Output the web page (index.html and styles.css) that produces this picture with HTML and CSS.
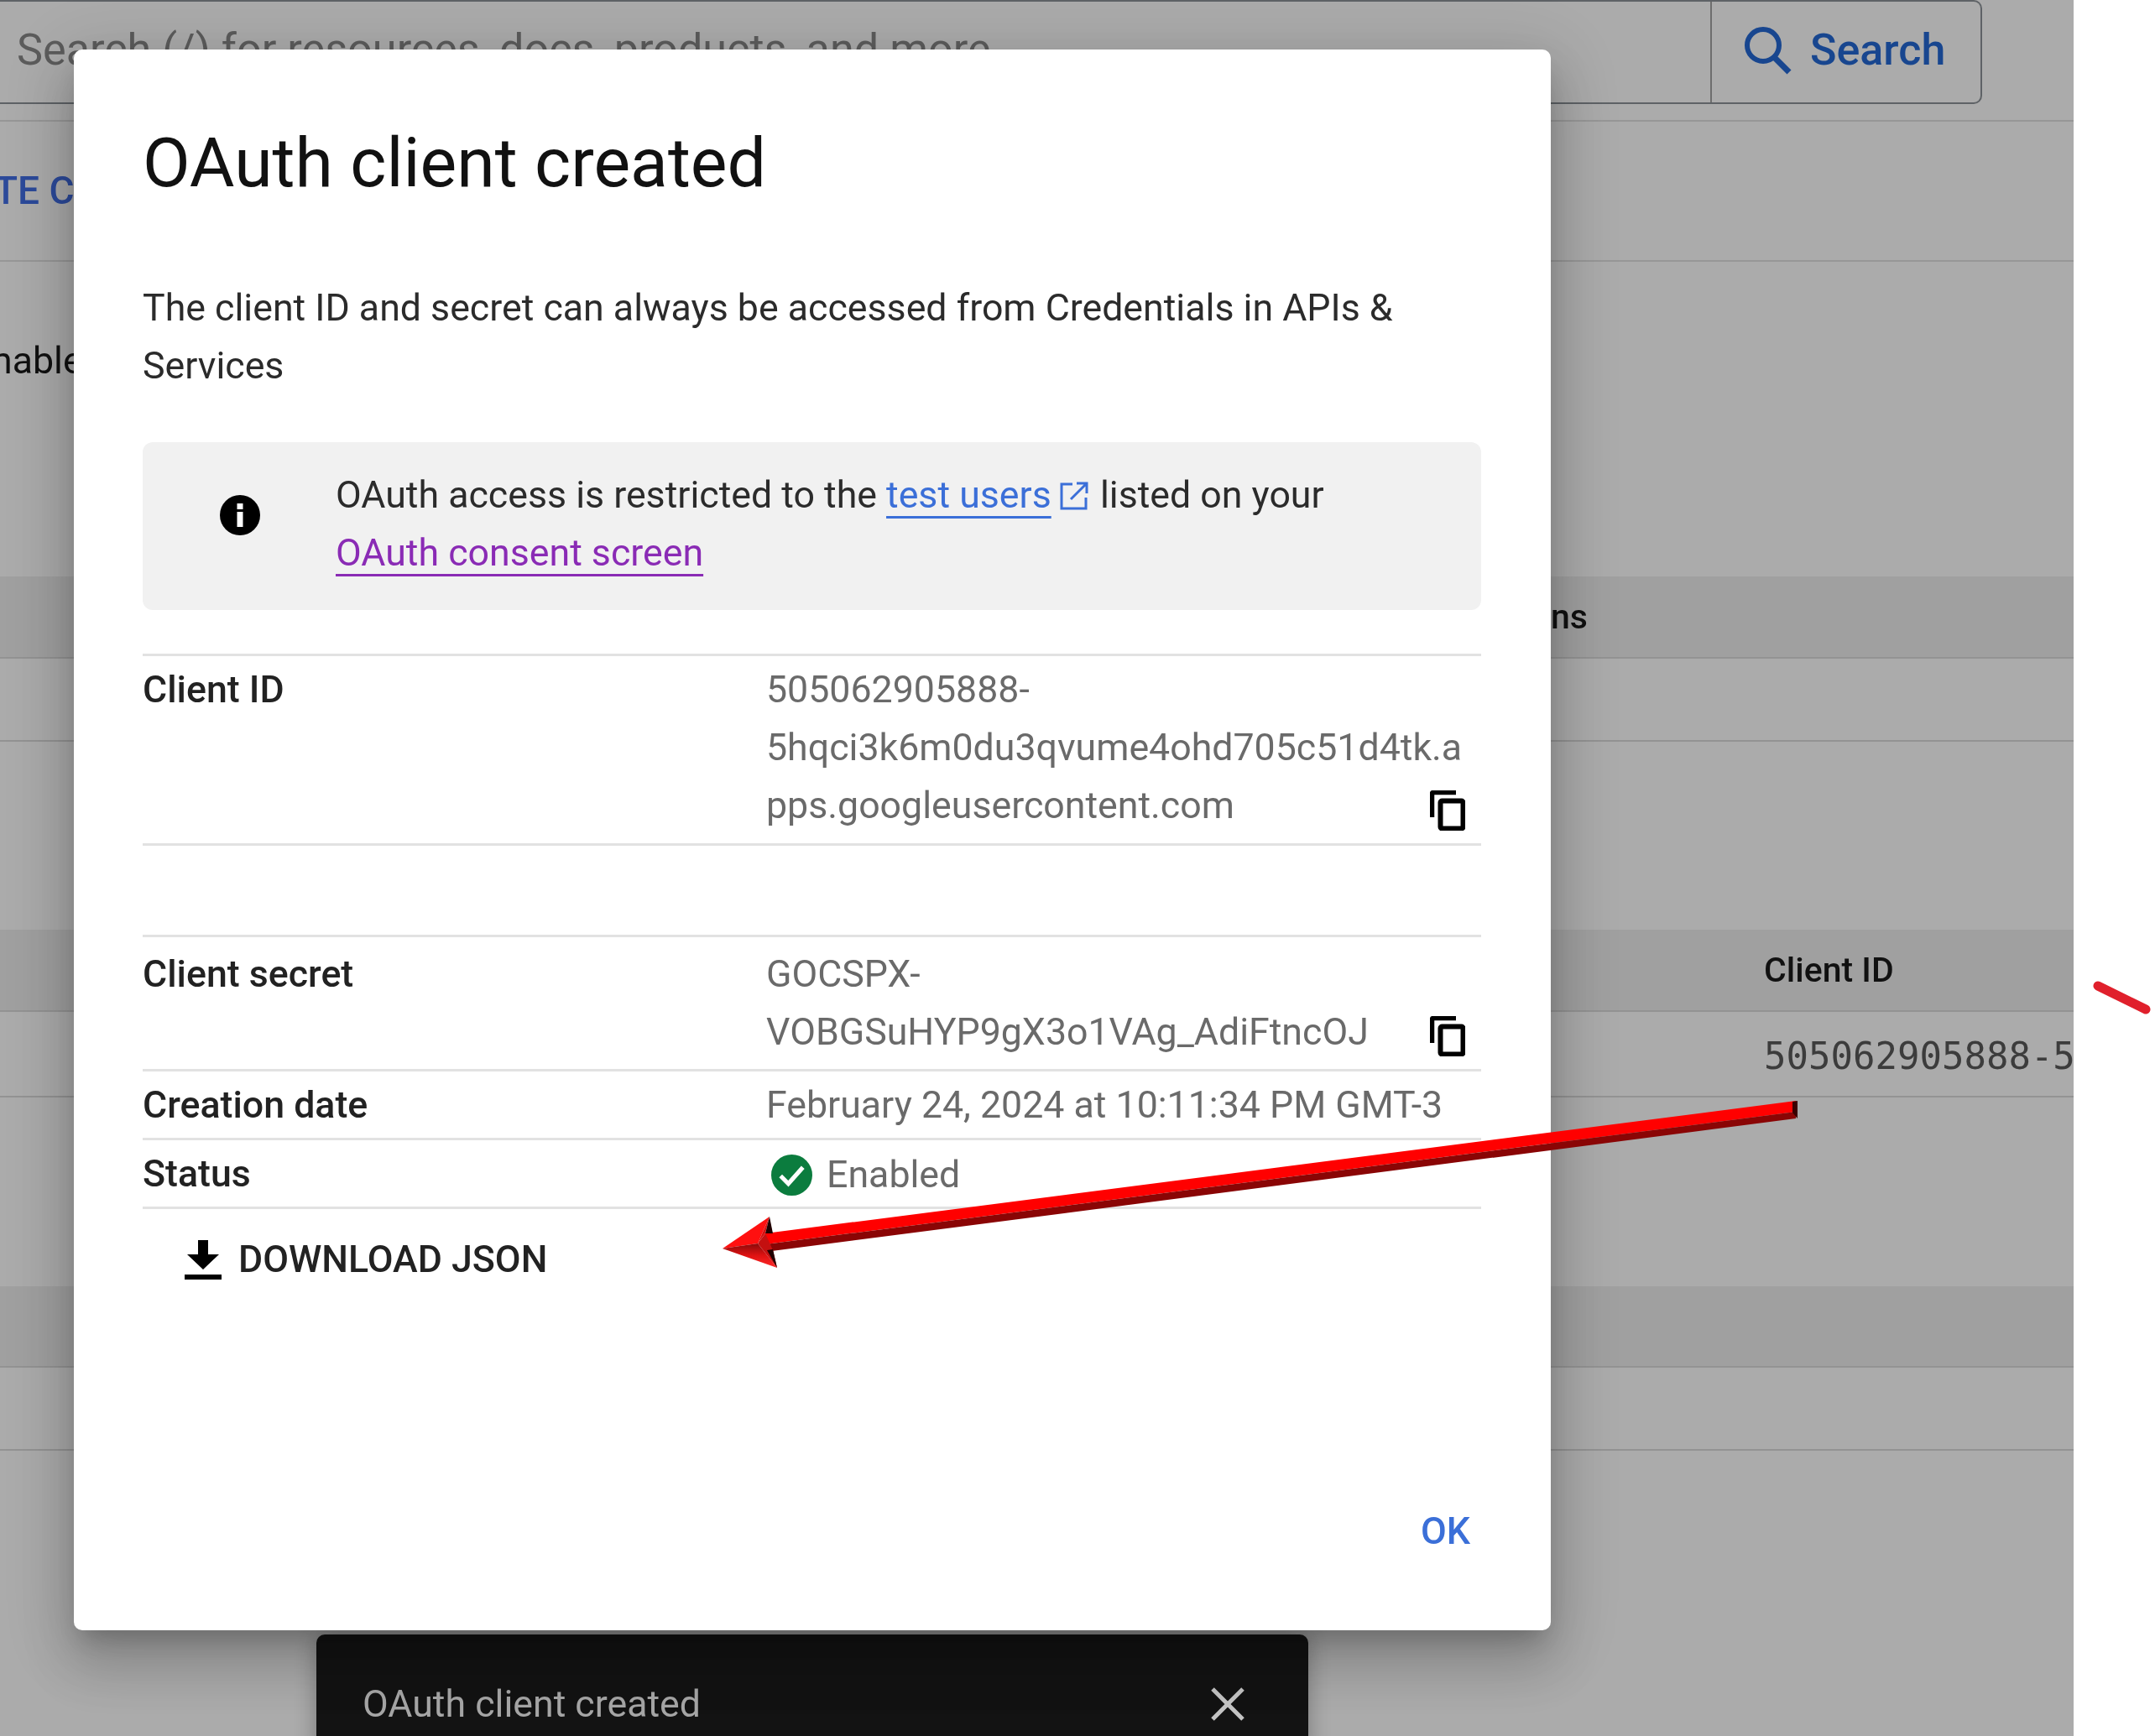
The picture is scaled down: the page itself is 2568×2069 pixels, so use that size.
FILE: index.html
```html
<!DOCTYPE html>
<html>
<head>
<meta charset="utf-8"/>
<title>OAuth client created</title>
<link rel="stylesheet" href="styles.css">
</head>
<body>
<div class="shot">

  <!-- the console page behind the dialog -->
  <div class="console">
    <div class="searchbar">
      <div class="searchbox">
        <span class="placeholder">Search (/) for resources, docs, products, and more</span>
        <span class="searchbtn">
          <svg class="searchicon" viewBox="0 0 60 60"><circle cx="25" cy="24" r="19" fill="none" stroke="currentColor" stroke-width="6"/><path d="M38 38 L56 56" stroke="currentColor" stroke-width="7" fill="none"/></svg>
          Search
        </span>
      </div>
    </div>
    <div class="actions">TE C</div>
    <div class="intro">nable</div>
    <div class="thead oauth-head"><span class="cut">ns</span></div>
    <div class="trow r1"></div>
    <div class="spacer s1"></div>
    <div class="thead client-head"><span class="client-col bold">Client ID</span></div>
    <div class="trow r2"><span class="client-col mono">505062905888-5</span></div>
    <div class="spacer s2"></div>
    <div class="thead third-head"></div>
    <div class="trow r3"></div>
  </div>

  <div class="toast">
    <span>OAuth client created</span>
    <svg class="toastclose" viewBox="0 0 42 40"><path d="M3 2 L39 38 M39 2 L3 38" stroke="currentColor" stroke-width="5" fill="none"/></svg>
  </div>

  <div class="dialog">
    <h1>OAuth client created</h1>
    <p class="desc">The client ID and secret can always be accessed from Credentials in APIs &amp; Services</p>

    <div class="notice">
      <svg class="infoicon" viewBox="0 0 48 48"><circle cx="24" cy="24" r="24" fill="#000"/><rect x="20.5" y="20" width="7" height="18" fill="#fff"/><rect x="20.5" y="10" width="7" height="7" fill="#fff"/></svg>
      <div class="noticetext">
        OAuth access is restricted to the <a class="lnk" href="#">test users</a>
        <svg class="exticon" viewBox="0 0 36 36"><path d="M16 4 H3 V33 H32 V20" fill="none" stroke="currentColor" stroke-width="3"/><path d="M14 22 L32 4 M21 3 H33 V15" fill="none" stroke="currentColor" stroke-width="3"/></svg>
        listed on your<br>
        <a class="lnk visited" href="#">OAuth consent screen</a>
      </div>
    </div>

    <div class="details">
      <div class="row rowid">
        <div class="label">Client ID</div>
        <div class="value">
          <div class="valtext">505062905888-5hqci3k6m0du3qvume4ohd705c51d4tk.apps.googleusercontent.com</div>
          <svg class="copyicon" viewBox="0 0 42 48"><path d="M2.5 32 V4 Q2.5 2.5 4 2.5 H31" fill="none" stroke="#000" stroke-width="5.5"/><rect x="12.5" y="12.5" width="27" height="33" rx="2" fill="none" stroke="#000" stroke-width="6"/></svg>
        </div>
      </div>
      <div class="rowgap"></div>
      <div class="row rowsecret">
        <div class="label">Client secret</div>
        <div class="value">
          <div class="valtext">GOCSPX-<br>VOBGSuHYP9gX3o1VAg_AdiFtncOJ</div>
          <svg class="copyicon" viewBox="0 0 42 48"><path d="M2.5 32 V4 Q2.5 2.5 4 2.5 H31" fill="none" stroke="#000" stroke-width="5.5"/><rect x="12.5" y="12.5" width="27" height="33" rx="2" fill="none" stroke="#000" stroke-width="6"/></svg>
        </div>
      </div>
      <div class="row rowshort">
        <div class="label">Creation date</div>
        <div class="value"><div class="valtext">February 24, 2024 at 10:11:34 PM GMT-3</div></div>
      </div>
      <div class="row rowshort">
        <div class="label">Status</div>
        <div class="value">
          <div class="status">
            <svg class="okicon" viewBox="0 0 48 48"><circle cx="24" cy="24" r="24" fill="#0b7c3e"/><path d="M11 25 L20 34 L37 15" fill="none" stroke="#fff" stroke-width="5"/></svg>
            Enabled
          </div>
        </div>
      </div>
    </div>

    <div class="download">
      <svg class="dlicon" viewBox="0 0 44 48"><path d="M16 0 H28 V17 H41 L22 35 L3 17 H16 Z" fill="#000"/><rect x="0" y="41" width="44" height="6" fill="#000"/></svg>
      DOWNLOAD JSON
    </div>

    <div class="dialogfoot"><span class="okbtn">OK</span></div>
  </div>

  <!-- red arrow pasted on top of the screenshot -->
  <svg class="markup" viewBox="0 0 2568 2069">
    <defs>
      <linearGradient id="headlow" x1="0" y1="0" x2="0" y2="1">
        <stop offset="0" stop-color="#8a0a0a"/>
        <stop offset=".5" stop-color="#e01212"/>
        <stop offset="1" stop-color="#ff2a2a"/>
      </linearGradient>
    </defs>
    <polygon points="2140,1312 2140,1325 912,1483 912,1470" fill="#ff0000"/>
    <polygon points="2140,1325 2140,1333 912,1492 912,1483" fill="#8a0505"/>
    <polygon points="2136,1313 2142,1312 2142,1333 2136,1326" fill="#3a0000"/>
    <polygon points="861,1488 917,1450 903,1482" fill="#ff1010"/>
    <polygon points="903,1482 917,1450 912,1470" fill="#d81010"/>
    <polygon points="861,1488 903,1482 926,1511" fill="url(#headlow)"/>
    <polygon points="903,1482 912,1470 921,1490 926,1511" fill="#c41010"/>
    <polygon points="917,1450 921,1470 912,1470" fill="#200000"/>
    <polygon points="921,1489 926,1511 914,1490" fill="#200000"/>
    <path d="M2500 1175 L2557 1203" stroke="#e0202c" stroke-width="11" stroke-linecap="round" fill="none"/>
  </svg>
</div>
</body>
</html>
```

FILE: styles.css
```css
html, body {
  margin: 0;
  padding: 0;
  background: #fff;
}

body {
  width: 2568px;
  height: 2069px;
  overflow: hidden;
  font-family: Roboto, "Liberation Sans", sans-serif;
}

.shot {
  position: relative;
  width: 2568px;
  height: 2069px;
  overflow: hidden;
  filter: blur(.6px);
}

/* page behind the scrim */
.console {
  width: 2471px;
  height: 2069px;
  overflow: hidden;
  background: #ababab;
  color: #111;
  font-size: 41px;
}

.searchbar {
  height: 143px;
  border-bottom: 2px solid #979797;
}

.searchbox {
  display: flex;
  justify-content: space-between;
  width: 2362px;
  height: 124px;
  box-sizing: border-box;
  border: 2px solid #5e6266;
  border-left: none;
  border-radius: 0 10px 10px 0;
}

.placeholder {
  padding-left: 20px;
  line-height: 116px;
  font-size: 52.2px;
  color: #5c5c5c;
}

.searchbtn {
  display: flex;
  align-items: center;
  gap: 21px;
  width: 322px;
  box-sizing: border-box;
  padding: 0 0 5px 36px;
  border-left: 2px solid #6e6e6e;
  font-size: 52px;
  font-weight: 500;
  color: #18468f;
}

.searchicon {
  width: 60px;
  height: 60px;
}

.actions {
  height: 165px;
  border-bottom: 2px solid #979797;
  line-height: 165px;
  font-size: 46px;
  font-weight: 500;
  color: #2c4a9a;
  margin-left: -7px;
}

.intro {
  height: 375px;
  padding-top: 87px;
  box-sizing: border-box;
  line-height: 62px;
  font-size: 44.7px;
  margin-left: -10px;
}

.thead {
  height: 98px;
  background: #a0a0a0;
  border-bottom: 2px solid #939393;
  box-sizing: border-box;
  line-height: 96px;
}

.trow {
  border-bottom: 2px solid #939393;
  box-sizing: border-box;
}

.r1 { height: 99px; }
.r2 { height: 102px; line-height: 106px; }
.r3 { height: 99px; }
.s1 { height: 224px; }
.s2 { height: 225px; }
.third-head { height: 97px; }

.cut {
  padding-left: 1848px;
  font-weight: 500;
}

.client-col {
  display: block;
  padding-left: 2102px;
  white-space: nowrap;
  overflow: hidden;
}

.bold {
  font-weight: 500;
}

.mono {
  font-family: "DejaVu Sans Mono", "Liberation Mono", monospace;
  font-size: 44px;
  color: #3c3c3c;
}

/* snackbar under the dialog */
.toast {
  position: absolute;
  left: 377px;
  top: 1948px;
  width: 1182px;
  height: 140px;
  box-sizing: border-box;
  display: flex;
  justify-content: space-between;
  padding: 58px 75px 0 55px;
  background: #131313;
  border-radius: 10px 10px 0 0;
  color: #a6a6a6;
  font-size: 44.7px;
  line-height: 50px;
  box-shadow: 0 0 26px rgba(0,0,0,.3);
}

.toastclose {
  width: 42px;
  height: 40px;
  margin-top: 5px;
  color: #c4c4c4;
}

/* dialog */
.dialog {
  position: absolute;
  left: 88px;
  top: 59px;
  width: 1760px;
  height: 1884px;
  box-sizing: border-box;
  padding: 0 83px 0 82px;
  background: #fff;
  border-radius: 10px;
  box-shadow: 0 18px 26px -10px rgba(0,0,0,.2), 0 40px 60px 6px rgba(0,0,0,.14), 0 14px 76px 14px rgba(0,0,0,.12);
  color: #202124;
}

.dialog h1 {
  margin: 0;
  padding-top: 97px;
  font-size: 82.4px;
  line-height: 76px;
  font-weight: 400;
  color: #111;
}

.desc {
  margin: 101px 0 0;
  font-size: 44.7px;
  line-height: 69px;
  color: #2b2b2b;
}

.notice {
  display: flex;
  height: 200px;
  margin-top: 56px;
  box-sizing: border-box;
  padding-top: 29px;
  background: #f1f1f1;
  border-radius: 12px;
}

.infoicon {
  width: 48px;
  height: 48px;
  margin: 34px 90px 0 92px;
  flex: none;
}

.noticetext {
  font-size: 44.7px;
  line-height: 69px;
  color: #2b2b2b;
}

.lnk {
  color: #3b6fd8;
  text-decoration: underline;
  text-decoration-thickness: 3px;
  text-underline-offset: 10px;
  text-decoration-skip-ink: none;
}

.visited {
  color: #8a2bb5;
}

.exticon {
  width: 36px;
  height: 36px;
  vertical-align: -4px;
  margin: 0 2px 0 -2px;
  color: #3b6fd8;
}

.details {
  margin-top: 52px;
  border-top: 3px solid #e2e2e2;
}

.row {
  display: grid;
  grid-template-columns: 743px 1fr;
  box-sizing: border-box;
  border-bottom: 3px solid #e2e2e2;
  font-size: 44.7px;
  line-height: 69px;
}

.rowid { height: 226px; padding-top: 5.5px; }
.rowsecret { height: 160px; padding-top: 9.5px; }
.rowshort { height: 82px; padding-top: 5.5px; }

.rowgap {
  height: 106px;
  border-bottom: 3px solid #e2e2e2;
}

.label {
  font-weight: 500;
  color: #222;
}

.value {
  display: grid;
  color: #6a6a6a;
}

.valtext {
  grid-area: 1 / 1;
  overflow-wrap: anywhere;
}

.copyicon {
  grid-area: 1 / 1;
  justify-self: end;
  align-self: end;
  width: 42px;
  height: 48px;
  margin-right: 19px;
  margin-bottom: 15px;
}

.status {
  display: flex;
  align-items: center;
  gap: 17px;
  margin-top: -1px;
}

.okicon {
  width: 49px;
  height: 49px;
  margin-left: 6px;
}

.download {
  display: flex;
  align-items: center;
  gap: 20px;
  padding: 33px 0 0 50px;
  font-size: 44.7px;
  line-height: 54px;
  font-weight: 500;
  color: #222;
}

.dlicon {
  width: 44px;
  height: 48px;
  margin-top: 2px;
}

.dialogfoot {
  display: flex;
  justify-content: flex-end;
  padding: 270px 13px 0 0;
}

.okbtn {
  font-size: 44.7px;
  line-height: 54px;
  font-weight: 500;
  color: #3b6fd8;
}

.markup {
  position: absolute;
  left: 0;
  top: 0;
  width: 2568px;
  height: 2069px;
  pointer-events: none;
}
```
